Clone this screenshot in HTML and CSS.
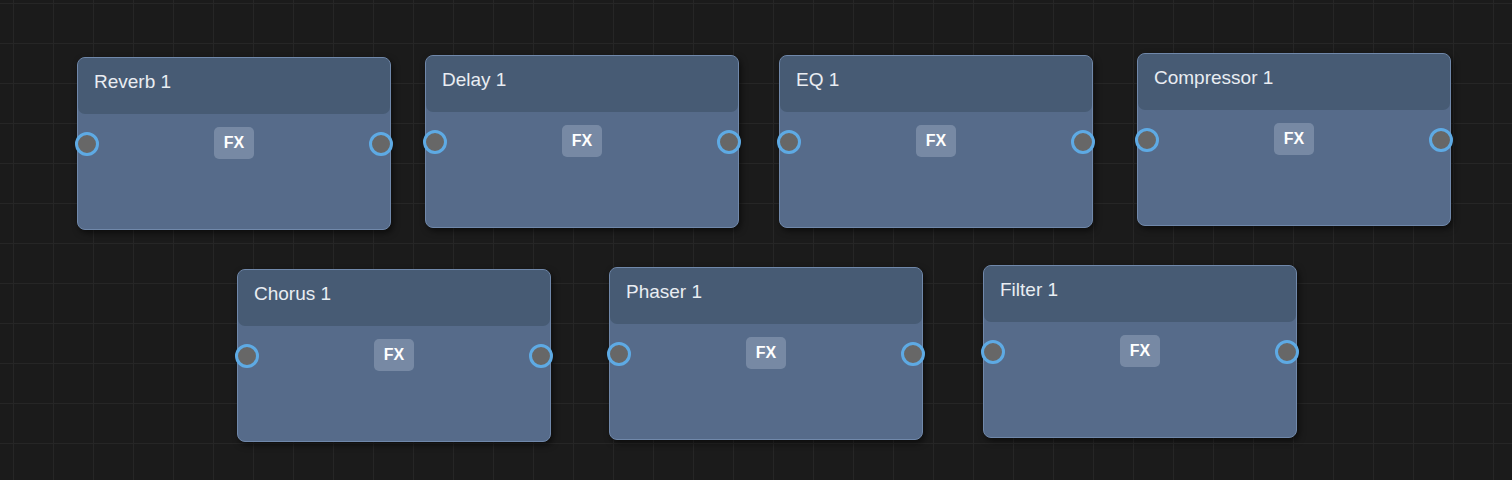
FILE: index.html
```html
<!DOCTYPE html>
<html lang="en">
<head>
    <meta charset="UTF-8">
    <meta name="viewport" content="width=device-width, initial-scale=1.0">
    <title>Effects Graph</title>
    <link rel="stylesheet" href="styles.css">
</head>
<body>
    <main class="canvas">
        <div class="node" style="left: 77px; top: 57px;">
            <div class="node-header">Reverb 1</div>
            <div class="node-body"><span class="badge">FX</span></div>
            <span class="port port-in"></span>
            <span class="port port-out"></span>
        </div>
        <div class="node" style="left: 425px; top: 55px;">
            <div class="node-header">Delay 1</div>
            <div class="node-body"><span class="badge">FX</span></div>
            <span class="port port-in"></span>
            <span class="port port-out"></span>
        </div>
        <div class="node" style="left: 779px; top: 55px;">
            <div class="node-header">EQ 1</div>
            <div class="node-body"><span class="badge">FX</span></div>
            <span class="port port-in"></span>
            <span class="port port-out"></span>
        </div>
        <div class="node" style="left: 1137px; top: 53px;">
            <div class="node-header">Compressor 1</div>
            <div class="node-body"><span class="badge">FX</span></div>
            <span class="port port-in"></span>
            <span class="port port-out"></span>
        </div>
        <div class="node" style="left: 237px; top: 269px;">
            <div class="node-header">Chorus 1</div>
            <div class="node-body"><span class="badge">FX</span></div>
            <span class="port port-in"></span>
            <span class="port port-out"></span>
        </div>
        <div class="node" style="left: 609px; top: 267px;">
            <div class="node-header">Phaser 1</div>
            <div class="node-body"><span class="badge">FX</span></div>
            <span class="port port-in"></span>
            <span class="port port-out"></span>
        </div>
        <div class="node" style="left: 983px; top: 265px;">
            <div class="node-header">Filter 1</div>
            <div class="node-body"><span class="badge">FX</span></div>
            <span class="port port-in"></span>
            <span class="port port-out"></span>
        </div>
    </main>
</body>
</html>
```

FILE: styles.css
```css
html, body {
    margin: 0;
    padding: 0;
    height: 100%;
}
body {
    font-family: "Liberation Sans", Arial, sans-serif;
    background-color: #1b1b1b;
    overflow: hidden;
}
.canvas {
    position: relative;
    width: 100%;
    height: 100%;
    background-color: #1b1b1b;
    background-image:
        linear-gradient(#262626 1px, transparent 1px),
        linear-gradient(90deg, #262626 1px, transparent 1px);
    background-size: 40px 40px;
    background-position: 13px 3px;
}
.node {
    position: absolute;
    width: 312px;
    height: 171px;
    display: flex;
    flex-direction: column;
    background-color: #566b8a;
    border: 1px solid #7088aa;
    border-radius: 8px;
    box-shadow: 2px 3px 6px rgba(0, 0, 0, 0.55);
}
.node-header {
    height: 56px;
    box-sizing: border-box;
    flex-shrink: 0;
    padding: 13px 16px 0;
    background-color: #475b74;
    border-radius: 7px;
    color: #e9edf2;
    font-size: 19px;
}
.node-body {
    flex: 1;
    display: flex;
    justify-content: center;
    align-items: flex-start;
    padding-top: 13px;
}
.badge {
    display: flex;
    align-items: center;
    justify-content: center;
    width: 40px;
    height: 32px;
    border-radius: 5px;
    background-color: #7789a4;
    color: #ffffff;
    font-size: 16px;
    font-weight: bold;
}
.port {
    position: absolute;
    top: 74px;
    width: 18px;
    height: 18px;
    border-radius: 50%;
    background-color: #676767;
    border: 3px solid #5eaae4;
}
.port-in {
    left: -3px;
}
.port-out {
    right: -3px;
}
```
